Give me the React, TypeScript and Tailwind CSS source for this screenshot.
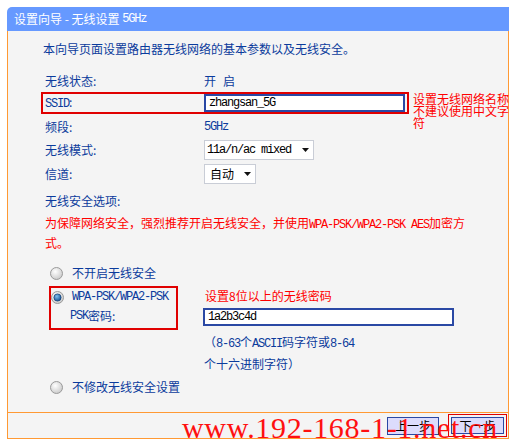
import React, { useId } from "react";

function M({ children }: { children: React.ReactNode }) {
  return (
    <span className="font-['Liberation_Mono',monospace] tracking-[-1.2px]">
      {children}
    </span>
  );
}

function Radio({ checked }: { checked?: boolean }) {
  const id = useId().replace(/:/g, "");
  return (
    <svg width="13" height="13" viewBox="0 0 13 13" className="shrink-0">
      <defs>
        <radialGradient id={`g${id}`} cx="40%" cy="35%" r="75%">
          <stop offset="0" stopColor="#ffffff" />
          <stop offset="1" stopColor="#c4c4c4" />
        </radialGradient>
        <radialGradient id={`b${id}`} cx="40%" cy="35%" r="70%">
          <stop offset="0" stopColor="#7fc0f0" />
          <stop offset="1" stopColor="#14508f" />
        </radialGradient>
      </defs>
      <circle cx="6.5" cy="6.5" r="6" fill={`url(#g${id})`} stroke="#9a9a9a" />
      {checked && (
        <circle cx="6.5" cy="6.5" r="3.6" fill={`url(#b${id})`} stroke="#0d3a70" strokeWidth="0.7" />
      )}
    </svg>
  );
}

function Arrow() {
  return (
    <svg width="7" height="4" viewBox="0 0 7 4" className="shrink-0">
      <polygon points="0,0 7,0 3.5,4" fill="#111" />
    </svg>
  );
}

export default function App() {
  return (
    <div className="relative w-[515px] h-[445px] bg-white overflow-hidden pt-[7px] pl-[7px] font-['Noto_Sans_CJK_SC',sans-serif] text-[12px] leading-none text-[#0b3b9c]">
      <div className="w-[502px]">
        {/* header */}
        <div className="h-[24px] bg-[#6699ff] rounded-tl-[5px] flex items-center pl-[7px] text-white">
          设置向导 - 无线设置&nbsp;<M>5GHz</M>
        </div>

        {/* body */}
        <div className="h-[381px] bg-[#f4f4f4] border-x border-[#ff9933] flex flex-col">
          <div className="h-[36px] flex items-center pl-[35px]">
            本向导页面设置路由器无线网络的基本参数以及无线安全。
          </div>

          <div className="mt-[4px] h-[20px] flex items-center pl-[37px]">
            <div className="w-[159px]">无线状态:</div>
            <span>开</span>
            <span className="ml-[7px]">启</span>
          </div>

          <div className="relative mt-[1px] h-[22px]">
            <div className="ml-[33px] w-[368px] h-[22px] border-2 border-[#e00000] flex items-center pl-[2px]">
              <div className="w-[159px]">
                <M>SSID</M>:
              </div>
              <div className="w-[201px] h-[18px] border-2 border-[#2a48a4] bg-white flex items-center pl-[3px] text-black">
                <M>zhangsan_5G</M>
              </div>
            </div>
            <div className="absolute left-[405px] top-[1px] text-[#ff0000] leading-[12px] whitespace-nowrap">
              设置无线网络名称
              <br />
              不建议使用中文字
              <br />符
            </div>
          </div>

          <div className="mt-[2px] h-[22px] flex items-center pl-[37px]">
            <div className="w-[159px]">频段:</div>
            <M>5GHz</M>
          </div>

          <div className="mt-[1px] h-[21px] flex items-center pl-[37px]">
            <div className="w-[159px]">无线模式:</div>
            <div className="w-[110px] h-[20px] bg-white border border-[#c9cdd6] flex items-center pl-[2px] text-black">
              <M>11a/n/ac mixed</M>
              <span className="ml-auto mr-[4px] flex">
                <Arrow />
              </span>
            </div>
          </div>

          <div className="mt-[3px] h-[22px] flex items-center pl-[37px]">
            <div className="w-[159px]">信道:</div>
            <div className="w-[52px] h-[20px] bg-white border border-[#c9cdd6] flex items-center pl-[5px] text-black">
              自动
              <span className="ml-auto mr-[4px] flex">
                <Arrow />
              </span>
            </div>
          </div>

          <div className="mt-[6px] h-[20px] flex items-center pl-[37px]">无线安全选项:</div>

          <div className="mt-[3px] pl-[37px] leading-[17px] text-[#ff0000] whitespace-nowrap">
            为保障网络安全，强烈推荐开启无线安全，并使用<M>WPA-PSK/WPA2-PSK AES</M>加密方
            <br />
            式。
          </div>

          <div className="mt-[12px] h-[20px] flex items-center pl-[42px] gap-[9px]">
            <Radio />
            <span>不开启无线安全</span>
          </div>

          <div className="mt-[3px] h-[44px] flex">
            <div className="ml-[41px] w-[129px] h-[44px] border-2 border-[#e00000] flex flex-col">
              <div className="h-[18px] flex items-center gap-[8px]">
                <Radio checked />
                <M>WPA-PSK/WPA2-PSK</M>
              </div>
              <div className="h-[20px] flex items-center pl-[19px]">
                <M>PSK</M>密码:
              </div>
            </div>
            <div className="ml-[25px] flex flex-col">
              <div className="h-[20px] flex items-center pl-[2px] text-[#ff0000]">设置8位以上的无线密码</div>
              <div className="mt-[2px] w-[251px] h-[18px] border-2 border-[#2a48a4] bg-white flex items-center pl-[3px] text-black">
                <M>1a2b3c4d</M>
              </div>
            </div>
          </div>

          <div className="mt-[2px] pl-[196px] leading-[19px] whitespace-nowrap">
            （<M>8-63</M>个<M>ASCII</M>码字符或<M>8-64</M>
            <br />
            个十六进制字符）
          </div>

          <div className="mt-[4px] h-[20px] flex items-center pl-[42px] gap-[9px]">
            <Radio />
            <span>不修改无线安全设置</span>
          </div>
        </div>

        {/* footer */}
        <div className="h-[27px] bg-[#f4f4f4] border border-[#ff9933] flex items-start justify-end pt-[1px] pr-[1px] text-black">
          <div className="mt-[3px] w-[52px] h-[18px] bg-[#dcdcfc] border border-[#2a48a4] flex items-center justify-center">
            上一步
          </div>
          <div className="ml-[9px] h-[23px] border border-[#e00000] p-[2px]">
            <div className="w-[53px] h-[17px] bg-[#dcdcfc] border border-[#2a48a4] flex items-center justify-center">
              下一步
            </div>
          </div>
        </div>
      </div>

      <div className="absolute left-[182px] top-[413px] font-['Liberation_Serif',serif] text-[30px] leading-none tracking-[0.7px] text-[#ff1010] whitespace-nowrap pointer-events-none">
        www.192-168-1-1.net.cn
      </div>
    </div>
  );
}
